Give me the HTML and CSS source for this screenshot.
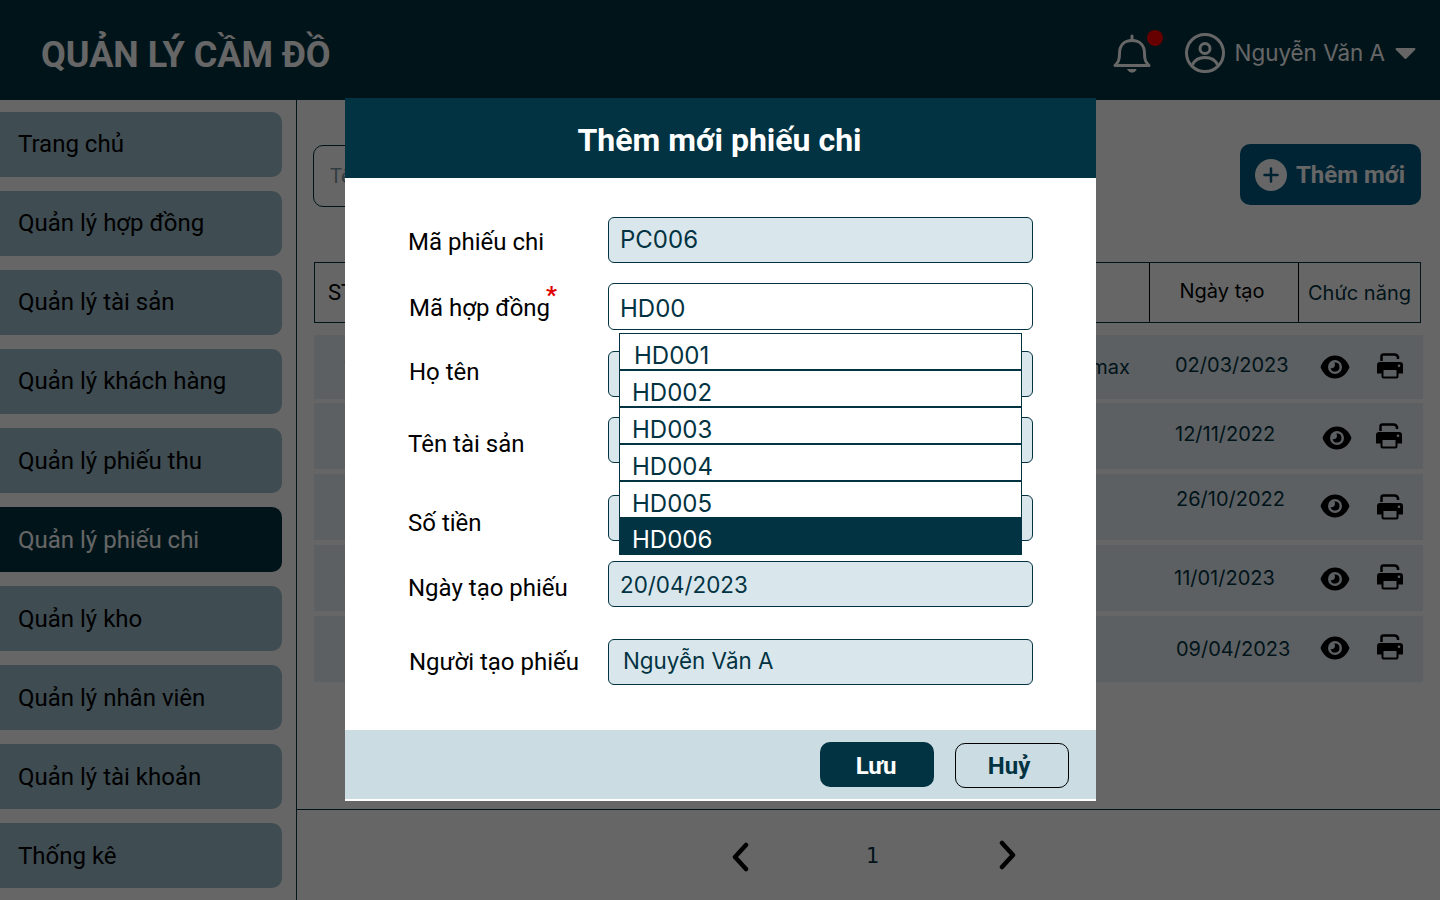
FILE: index.html
```html
<!DOCTYPE html>
<html lang="vi">
<head>
    <meta charset="UTF-8">
    <title>Quản lý cầm đồ</title>
    <link rel="stylesheet" href="styles.css">
</head>
<body>
    <header class="topbar">
        <div class="brand">QUẢN LÝ CẦM ĐỒ</div>
        <div class="user-area">
            <span class="bell">
                <svg width="38" height="42" viewBox="0 0 38 42" fill="none" stroke="#fff" stroke-width="3" stroke-linecap="round" stroke-linejoin="round">
                    <path d="M2 33.500h34c-3-3-4.500-5-4.500-12 0-8-4.500-13-12.500-13s-12.500 5-12.500 13c0 7-1.500 9-4.500 12z"/>
                    <path d="M19 8V4"/>
                    <path d="M15 37.500h8c0 3.500-8 3.500-8 0z" fill="#fff" stroke-width="1"/>
                </svg>
                <span class="bell-dot"></span>
            </span>
            <svg class="avatar" width="40" height="40" viewBox="0 0 40 40" fill="none" stroke="#fff" stroke-width="3">
                <circle cx="20" cy="20" r="18.500"/>
                <circle cx="20" cy="15.500" r="5"/>
                <path d="M7.500 32c2-5 7-7.500 12.500-7.500S30.500 27 32.500 32"/>
            </svg>
            <span class="user-name">Nguyễn Văn A</span>
            <svg width="21" height="13" viewBox="0 0 21 13"><path d="M1.500 1h18a1 1 0 0 1 .7 1.700l-9 9a1 1 0 0 1-1.400 0l-9-9A1 1 0 0 1 1.500 1z" fill="#fff"/></svg>
        </div>
    </header>

    <div class="layout">
        <aside class="sidebar">
            <a class="side-item">Trang chủ</a>
            <a class="side-item">Quản lý hợp đồng</a>
            <a class="side-item">Quản lý tài sản</a>
            <a class="side-item">Quản lý khách hàng</a>
            <a class="side-item">Quản lý phiếu thu</a>
            <a class="side-item active">Quản lý phiếu chi</a>
            <a class="side-item">Quản lý kho</a>
            <a class="side-item">Quản lý nhân viên</a>
            <a class="side-item">Quản lý tài khoản</a>
            <a class="side-item">Thống kê</a>
        </aside>

        <main class="content">
            <div class="toolbar">
                <div class="search">Tên khách hàng</div>
                <button class="add-btn">
                    <svg width="32" height="32" viewBox="0 0 32 32"><circle cx="16" cy="16" r="16" fill="#fff"/><path d="M16 9.500v13M9.500 16h13" stroke="#00577d" stroke-width="2.500" stroke-linecap="round"/></svg>
                    Thêm mới
                </button>
            </div>

            <div class="table-head">
                <div class="th th-stt">STT</div>
                <div class="th th-fill"></div>
                <div class="th th-date">Ngày tạo</div>
                <div class="th th-func">Chức năng</div>
            </div>

            <div class="rows">
                <div class="row r1">
                    <span class="stt">1</span>
                    <span class="name">iPhone 14 Pro max</span>
                    <span class="date">02/03/2023</span>
                    <svg class="eye"><use href="#eye"/></svg>
                    <svg class="printer"><use href="#printer"/></svg>
                </div>
                <div class="row r2">
                    <span class="stt"></span>
                    <span class="name">Laptop Asus Vivobook n</span>
                    <span class="date">12/11/2022</span>
                    <svg class="eye"><use href="#eye"/></svg>
                    <svg class="printer"><use href="#printer"/></svg>
                </div>
                <div class="row r3">
                    <span class="stt">3</span>
                    <span class="name"></span>
                    <span class="date">26/10/2022</span>
                    <svg class="eye"><use href="#eye"/></svg>
                    <svg class="printer"><use href="#printer"/></svg>
                </div>
                <div class="row r4">
                    <span class="stt">4</span>
                    <span class="name"></span>
                    <span class="date">11/01/2023</span>
                    <svg class="eye"><use href="#eye"/></svg>
                    <svg class="printer"><use href="#printer"/></svg>
                </div>
                <div class="row r5">
                    <span class="stt"></span>
                    <span class="name"></span>
                    <span class="date">09/04/2023</span>
                    <svg class="eye"><use href="#eye"/></svg>
                    <svg class="printer"><use href="#printer"/></svg>
                </div>
            </div>

            <div class="pager">
                <svg class="pager-prev" width="20" height="30" viewBox="0 0 20 30" fill="none" stroke="#000" stroke-width="4.500" stroke-linecap="round" stroke-linejoin="round"><path d="M16 3 5 15l11 12"/></svg>
                <span class="page-num">1</span>
                <svg class="pager-next" width="20" height="30" viewBox="0 0 20 30" fill="none" stroke="#000" stroke-width="4.500" stroke-linecap="round" stroke-linejoin="round"><path d="m4 3 11 12L4 27"/></svg>
            </div>
        </main>
    </div>

    <svg class="sprites" width="0" height="0">
        <symbol id="eye" viewBox="0 0 30 24">
            <path fill-rule="evenodd" d="M15 0.500C8.500 0.500 3 5 0.500 12 3 19 8.500 23.500 15 23.500S27 19 29.500 12C27 5 21.500 0.500 15 0.500zM15 5a7 7 0 1 1 0 14 7 7 0 0 1 0-14z"/>
            <path d="M15 7.500a4.500 4.500 0 1 1-4.400 5.400c1.800 1 4.400-.6 4.400-2.900 0-1-.3-1.800-.8-2.400z"/>
        </symbol>
        <symbol id="printer" viewBox="0 0 26 26">
            <path d="M4.500 8V3.500a2 2 0 0 1 2-2h11c2 0 3 1 3.500 2.500v2" fill="none" stroke="#000" stroke-width="2.500"/>
            <path fill-rule="evenodd" d="M3 9h20a3 3 0 0 1 3 3v8.500h-4.500v3a2 2 0 0 1-2 2H6.500a2 2 0 0 1-2-2v-3H0V12a3 3 0 0 1 3-3zM6.500 17v6.500h13V17zM22 11.500a1.300 1.300 0 1 0 0 2.600 1.300 1.300 0 0 0 0-2.600z"/>
        </symbol>
    </svg>

    <div class="overlay"></div>

    <div class="modal">
        <div class="modal-head">Thêm mới phiếu chi</div>
        <div class="modal-body">
            <div class="field f1"><label>Mã phiếu chi</label><div class="input">PC006</div></div>
            <div class="field f2"><label>Mã hợp đồng<sup class="req">*</sup></label><div class="input white">HD00</div></div>
            <div class="field f3"><label>Họ tên</label><div class="input"></div></div>
            <div class="field f4"><label>Tên tài sản</label><div class="input"></div></div>
            <div class="field f5"><label>Số tiền</label><div class="input"></div></div>
            <div class="field f6"><label>Ngày tạo phiếu</label><div class="input">20/04/2023</div></div>
            <div class="field f7"><label>Người tạo phiếu</label><div class="input">Nguyễn Văn A</div></div>

            <ul class="dropdown">
                <li class="first">HD001</li>
                <li>HD002</li>
                <li>HD003</li>
                <li>HD004</li>
                <li class="plain">HD005</li>
                <li class="selected">HD006</li>
            </ul>
        </div>
        <div class="modal-foot">
            <button class="btn-save">Lưu</button>
            <button class="btn-cancel">Huỷ</button>
        </div>
    </div>
</body>
</html>
```

FILE: styles.css
```css
* {
    box-sizing: border-box;
}
body {
    margin: 0;
    width: 1440px;
    height: 900px;
    overflow: hidden;
    background-color: #fff;
    font-family: Roboto, sans-serif;
    color: #000;
}
button {
    font-family: inherit;
    cursor: pointer;
}

/* top bar */
.topbar {
    height: 100px;
    background-color: #023342;
    color: #fff;
    display: flex;
    align-items: center;
    justify-content: space-between;
    padding: 0 24px 0 41px;
}
.brand {
    font-size: 36px;
    font-weight: 700;
    padding-top: 10px;
}
.user-area {
    display: flex;
    align-items: center;
    margin-top: 6px;
}
.bell {
    position: relative;
    display: flex;
    margin-right: 34px;
}
.bell-dot {
    position: absolute;
    top: -2px;
    right: -12px;
    width: 16px;
    height: 16px;
    border-radius: 50%;
    background-color: #ff0000;
}
.user-name {
    font-family: Inter, sans-serif;
    font-size: 22.4px;
    margin: 0 10px;
    padding-bottom: 2px;
}
.sprites {
    position: absolute;
}

/* sidebar */
.layout {
    display: flex;
    height: 800px;
}
.sidebar {
    width: 297px;
    flex: none;
    border-right: 1px solid #023342;
    padding-top: 12px;
    display: flex;
    flex-direction: column;
    gap: 14px;
}
.side-item {
    width: 282px;
    height: 65px;
    flex: none;
    background-color: #9fbecd;
    border-radius: 0 10px 10px 0;
    font-size: 24px;
    padding: 18px 0 0 18px;
    line-height: 28px;
}
.side-item:nth-child(n+5) {
    padding-top: 19px;
}
.side-item.active {
    background-color: #023342;
    color: #fff;
}

/* main area */
.content {
    flex: 1;
    display: flex;
    flex-direction: column;
    padding-left: 16px;
}
.toolbar {
    display: flex;
    flex: none;
    justify-content: space-between;
    padding: 44px 19px 0 0;
    height: 162px;
}
.search {
    width: 420px;
    height: 62px;
    margin-top: 1px;
    border: 1px solid #023342;
    border-radius: 10px;
    padding: 18px 16px;
    font-size: 20px;
    color: #7f98a3;
}
.add-btn {
    width: 181px;
    height: 61px;
    border: 0;
    border-radius: 10px;
    background-color: #005a82;
    color: #fff;
    font-size: 24px;
    font-weight: 700;
    display: flex;
    align-items: center;
    gap: 9px;
    padding: 0 0 0 15px;
}
.table-head {
    display: flex;
    flex: none;
    width: 1107px;
    margin-left: 1px;
    height: 61px;
    border: 1px solid #023342;
    font-size: 22px;
    align-items: stretch;
}
.th {
    display: flex;
    align-items: center;
    justify-content: center;
}
.th-stt {
    width: 60px;
    justify-content: flex-start;
    padding-left: 13px;
}
.th-fill {
    flex: 1;
}
.th-date {
    width: 150px;
    border-left: 1px solid #000;
    border-right: 1px solid #000;
    padding: 0 4px 4px 0;
    font-family: Inter, sans-serif;
    font-size: 20px;
}
.th-func {
    width: 121px;
    color: #023342;
    font-family: Inter, sans-serif;
    font-size: 20px;
}

/* table rows */
.rows {
    flex: none;
    margin-top: 12px;
    margin-left: 1px;
    width: 1109px;
    display: flex;
    flex-direction: column;
}
.row {
    height: 66px;
    flex: none;
    margin-bottom: 5px;
    background-color: #e6f0f7;
    display: flex;
    align-items: center;
    color: #023342;
    font-family: Inter, sans-serif;
    font-size: 20px;
}
.stt {
    width: 60px;
    padding-left: 30px;
    flex: none;
}
.name {
    width: 756px;
    flex: none;
    text-align: right;
    white-space: nowrap;
}
.date {
    width: 145px;
    margin-left: 45px;
    flex: none;
    padding-bottom: 4px;
}
.eye {
    width: 30px;
    height: 24px;
    flex: none;
}
.printer {
    width: 26px;
    height: 26px;
    margin-left: 27px;
    flex: none;
}
.r1 {
    height: 64px;
    margin-bottom: 4px;
}
.r1 .printer {
    margin-top: -2px;
}
.r2 .eye {
    margin-left: 2px;
    margin-top: 4px;
}
.r2 .printer {
    margin-left: 24px;
}
.r2 .name {
    padding-right: 33px;
}
.r3 .date {
    padding: 0 0 16px 1px;
}
.r3 .eye {
    margin-top: -2px;
}
.r4 .date {
    padding: 0;
    margin-left: 44px;
    width: 146px;
}
.r4 .eye {
    margin-top: 2px;
}
.r4 .printer {
    margin-top: -2px;
}
.r5 .date {
    padding: 0 0 0 1px;
}
.r5 .eye {
    margin-top: -2px;
}
.r5 .printer {
    margin-top: -4px;
}
.pager {
    flex: none;
    margin: 122px 0 0 -16px;
    border-top: 1px solid #023342;
    height: 91px;
    display: flex;
    align-items: center;
    justify-content: flex-start;
    padding-left: 433px;
}
.pager-prev {
    margin-top: 4px;
}
.pager-next {
    margin-top: 0;
}
.page-num {
    font-family: "DejaVu Sans", sans-serif;
    font-size: 21px;
    color: #023342;
    margin: 2px 119px 0 116px;
}

/* modal */
.overlay {
    position: fixed;
    inset: 0;
    background-color: rgba(0, 0, 0, 0.6);
}
.modal {
    position: absolute;
    left: 345px;
    top: 98px;
    width: 751px;
    height: 703px;
    background-color: #fff;
    display: flex;
    flex-direction: column;
}
.modal-head {
    height: 80px;
    flex: none;
    background-color: #023342;
    color: #fff;
    font-size: 32px;
    font-weight: 700;
    display: flex;
    align-items: center;
    justify-content: center;
    padding: 3px 2px 0 0;
}
.modal-body {
    position: relative;
    flex: 1;
}
.field {
    display: flex;
    align-items: center;
    position: absolute;
    left: 63px;
    width: 625px;
}
.field label {
    width: 200px;
    font-size: 24px;
    flex: none;
    white-space: nowrap;
}
.f1 { top: 39px; }
.f2 { top: 105px; }
.f3 { top: 173px; }
.f4 { top: 239px; }
.f5 { top: 317px; }
.f6 { top: 383px; }
.f7 { top: 461px; }
.f2 label, .f3 label, .f7 label {
    padding-left: 1px;
}
.f1 label { padding-top: 4px; }
.f2 label { padding-top: 2px; }
.f3 label { padding-bottom: 4px; }
.f4 label { padding-top: 8px; }
.f5 label { padding-top: 10px; }
.f6 label { padding-top: 8px; }
.input {
    width: 425px;
    height: 46px;
    flex: none;
    background-color: #d9e6ec;
    border: 1px solid #023342;
    border-radius: 6px;
    font-family: Inter, sans-serif;
    font-size: 24px;
    color: #023342;
    padding: 7px 11px;
    line-height: 30px;
}
.input.white {
    background-color: #fff;
    height: 47px;
    padding-top: 10px;
}
.f6 .input {
    font-size: 22.4px;
    padding-top: 8px;
}
.f7 .input {
    font-size: 22.4px;
    padding: 6px 14px;
}
.req {
    color: #e00000;
    font-size: 24px;
    font-weight: 700;
    line-height: 0;
    position: absolute;
    margin-left: -4px;
    margin-top: 1px;
}
.dropdown {
    position: absolute;
    left: 274px;
    top: 155px;
    width: 403px;
    height: 222px;
    margin: 0;
    padding: 0;
    list-style: none;
    background-color: #fff;
    border: 1px solid #023342;
    font-family: Inter, sans-serif;
    font-size: 24px;
    color: #023342;
    overflow: hidden;
}
.dropdown li {
    height: 37px;
    padding: 7px 0 0 12px;
    line-height: 30px;
    border-bottom: 2px solid #023342;
}
.dropdown .first {
    padding-left: 14px;
}
.dropdown .plain {
    border-bottom: 0;
    height: 35px;
}
.dropdown .selected {
    height: 39px;
    padding-top: 8px;
    background-color: #023342;
    color: #fff;
    border-bottom: 0;
}
.modal-foot {
    height: 69px;
    flex: none;
    margin-bottom: 2px;
    background-color: #cbdce3;
    display: flex;
    justify-content: flex-end;
    gap: 21px;
    padding: 12px 27px 0 0;
}
.btn-save,
.btn-cancel {
    width: 114px;
    height: 45px;
    border-radius: 10px;
    font-size: 24px;
    font-weight: 700;
}
.btn-save {
    background-color: #023342;
    color: #fff;
    border: 0;
    padding: 2px 8px 0 6px;
}
.btn-cancel {
    background-color: transparent;
    color: #023342;
    border: 1px solid #000;
    margin-top: 1px;
    padding: 0 12px 0 6px;
}
```
